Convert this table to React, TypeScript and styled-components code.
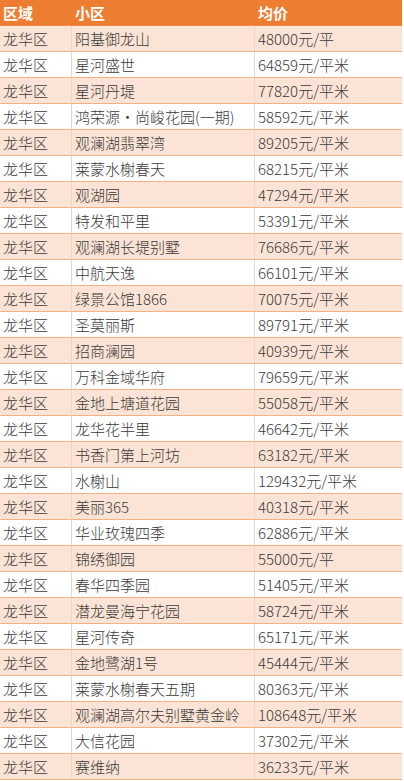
import React from 'react';
import styled, { createGlobalStyle } from 'styled-components';

const GlobalStyle = createGlobalStyle`
  html, body {
    margin: 0;
    padding: 0;
    background: #ffffff;
  }
  body {
    font-family: "Noto Sans CJK SC", "Noto Sans", sans-serif;
  }
`;

const rows: [string, string][] = [
  ['阳基御龙山', '48000元/平'],
  ['星河盛世', '64859元/平米'],
  ['星河丹堤', '77820元/平米'],
  ['鸿荣源·尚峻花园(一期)', '58592元/平米'],
  ['观澜湖翡翠湾', '89205元/平米'],
  ['莱蒙水榭春天', '68215元/平米'],
  ['观湖园', '47294元/平米'],
  ['特发和平里', '53391元/平米'],
  ['观澜湖长堤别墅', '76686元/平米'],
  ['中航天逸', '66101元/平米'],
  ['绿景公馆1866', '70075元/平米'],
  ['圣莫丽斯', '89791元/平米'],
  ['招商澜园', '40939元/平米'],
  ['万科金域华府', '79659元/平米'],
  ['金地上塘道花园', '55058元/平米'],
  ['龙华花半里', '46642元/平米'],
  ['书香门第上河坊', '63182元/平米'],
  ['水榭山', '129432元/平米'],
  ['美丽365', '40318元/平米'],
  ['华业玫瑰四季', '62886元/平米'],
  ['锦绣御园', '55000元/平'],
  ['春华四季园', '51405元/平米'],
  ['潜龙曼海宁花园', '58724元/平米'],
  ['星河传奇', '65171元/平米'],
  ['金地鹭湖1号', '45444元/平米'],
  ['莱蒙水榭春天五期', '80363元/平米'],
  ['观澜湖高尔夫别墅黄金岭', '108648元/平米'],
  ['大信花园', '37302元/平米'],
  ['赛维纳', '36233元/平米'],
];

const Table = styled.div`
  width: 402px;
  display: grid;
  grid-template-columns: 71px 183px 148px;
  border-right: 1px solid #f4b183;
  box-sizing: border-box;
`;

const HeadCell = styled.div<{ $first?: boolean }>`
  height: 25px;
  line-height: 25px;
  background: #ed7d31;
  border-bottom: 1px solid #ef8a45;
  color: #ffffff;
  font-weight: 700;
  font-size: 15px;
  padding-left: ${(p) => (p.$first ? '3px' : '4px')};
  white-space: nowrap;
`;

const Cell = styled.div<{ $shaded: boolean; $first?: boolean }>`
  height: 25px;
  line-height: 25px;
  background: ${(p) => (p.$shaded ? '#fbe4d5' : '#ffffff')};
  border-bottom: 1px solid #f4b183;
  border-left: ${(p) =>
    p.$first ? 'none' : `1px solid ${p.$shaded ? '#f3d4c0' : '#d9d9d9'}`};
  color: #3a3a3a;
  font-size: 15px;
  font-weight: 300;
  padding-left: 3px;
  white-space: nowrap;
  overflow: hidden;
`;

export default function App() {
  return (
    <>
      <GlobalStyle />
      <Table>
        <HeadCell $first>区域</HeadCell>
        <HeadCell>小区</HeadCell>
        <HeadCell>均价</HeadCell>
        {rows.map(([name, price], i) => {
          const shaded = i % 2 === 0;
          return (
            <React.Fragment key={name}>
              <Cell $shaded={shaded} $first>
                龙华区
              </Cell>
              <Cell $shaded={shaded}>{name}</Cell>
              <Cell $shaded={shaded}>{price}</Cell>
            </React.Fragment>
          );
        })}
      </Table>
    </>
  );
}
